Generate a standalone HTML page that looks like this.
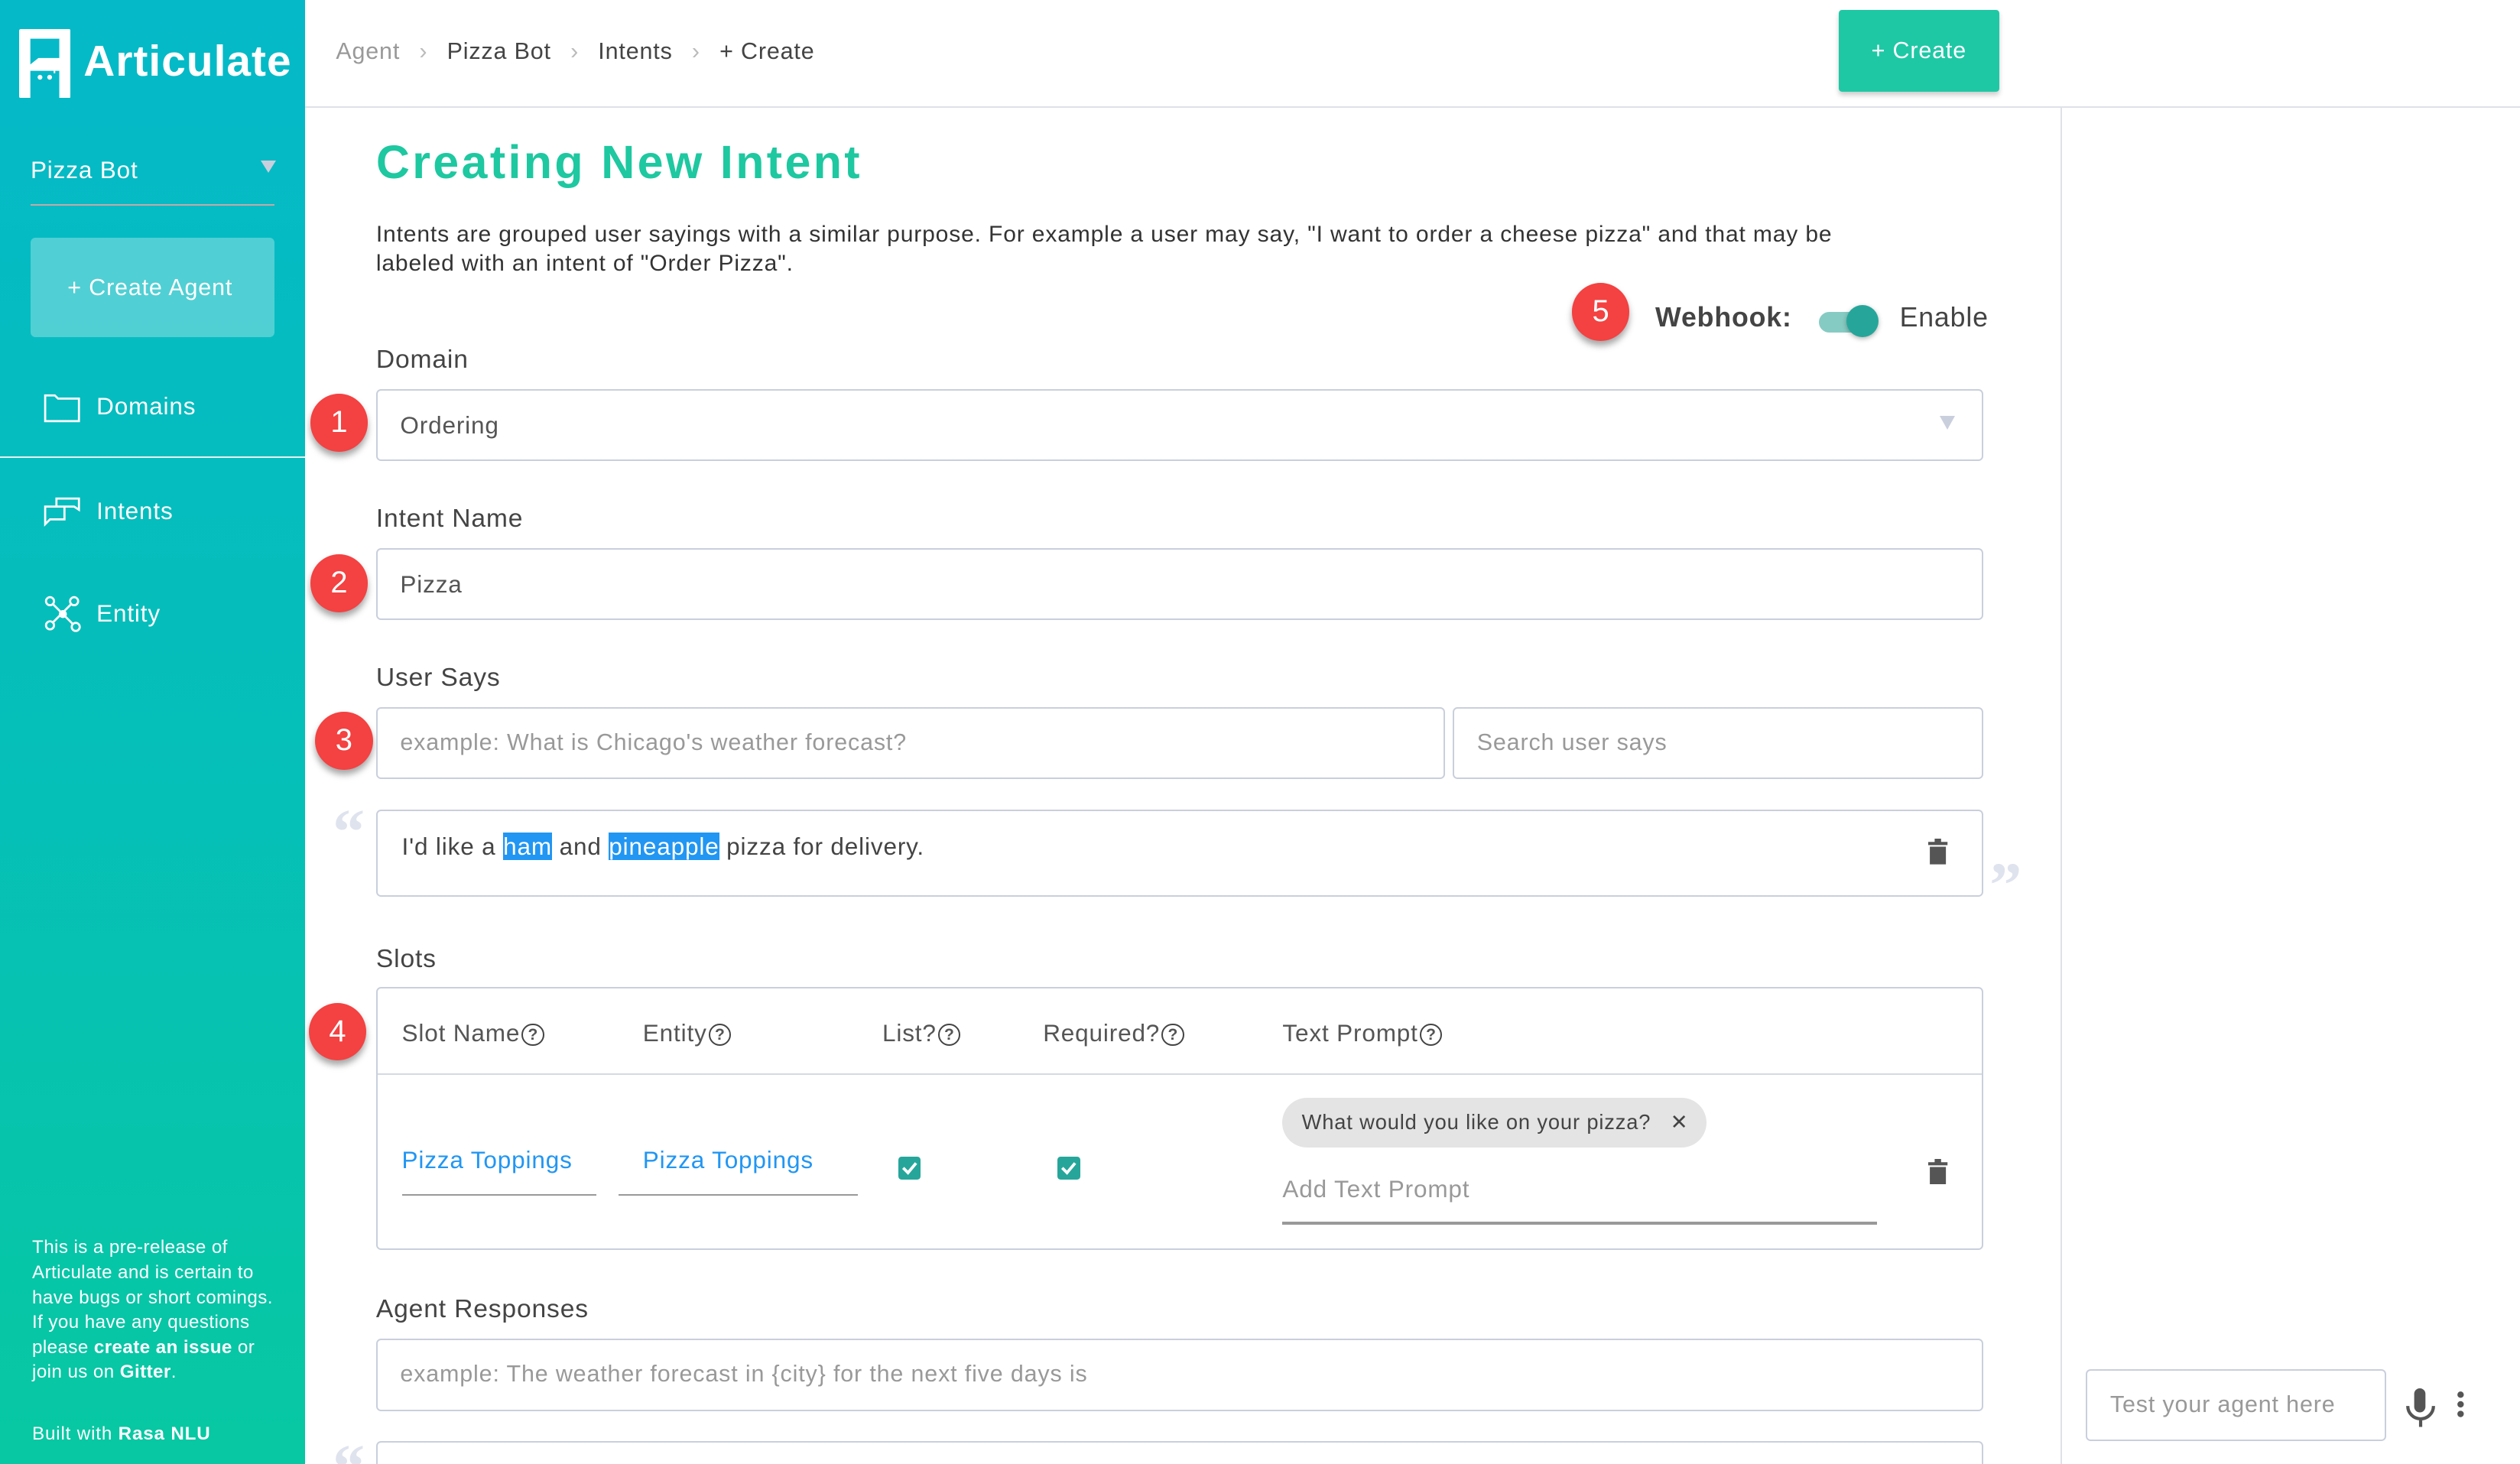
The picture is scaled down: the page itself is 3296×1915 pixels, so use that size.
<!DOCTYPE html>
<html><head><meta charset="utf-8"><style>
html,body{margin:0;padding:0;background:#fff;overflow:hidden}
#w{position:relative;width:1568px;height:911px;zoom:2.102;font-family:"Liberation Sans",sans-serif;color:#444;letter-spacing:0.4px}
.a{position:absolute;white-space:nowrap}
.side{position:absolute;left:0;top:0;width:190px;height:911px;background:linear-gradient(180deg,#05b9c8 0%,#05bfb9 50%,#07c8a2 100%)}
.w{color:#fff}
.box{position:absolute;border:1px solid #c9cfdc;border-radius:3px;background:#fff;box-sizing:border-box}
.lbl{font-size:16px;color:#444}
.badge{position:absolute;width:36px;height:36px;border-radius:50%;background:#f44141;color:#fff;font-size:19px;text-align:center;line-height:36px;box-shadow:0 3px 4px rgba(0,0,0,.35);letter-spacing:0}
.ph{color:#999;font-size:14.5px}
.q{font-size:15px;color:#555}
.help{display:inline-block;width:12px;height:12px;border:1.3px solid #444;border-radius:50%;font-size:10px;line-height:12px;text-align:center;vertical-align:1px;margin-left:1px;font-weight:bold;letter-spacing:0}
.chk{position:absolute;width:14px;height:14px;background:#26a69a;border-radius:2px}
.sep{color:#bbb;margin:0 12px}
</style></head><body><div id="w">
<div class="side">
 <svg class="a" style="left:12px;top:18px" width="32" height="43" viewBox="0 0 32 43"><rect width="32" height="43" rx="1" fill="#fff"/><path d="M7 6h18v12H12l-5 4z" fill="#05b9c8"/><path d="M7 26h18v17H7z" fill="#05b9c8"/><circle cx="13" cy="30" r="1.5" fill="#fff"/><circle cx="19" cy="30" r="1.5" fill="#fff"/><circle cx="22" cy="22" r="1.5" fill="none" stroke="#fff"/><path d="M22 23.5v4" stroke="#fff"/></svg>
 <div class="a w" style="left:52px;top:23px;font-size:27px;font-weight:bold;letter-spacing:0.5px">Articulate</div>
 <div class="a w" style="left:19px;top:97px;font-size:15px">Pizza Bot</div>
 <div class="a" style="left:162px;top:100px;width:0;height:0;border-left:5px solid transparent;border-right:5px solid transparent;border-top:8px solid #c9cfdc"></div>
 <div class="a" style="left:19px;top:127px;width:152px;height:1px;background:#c3a9a9"></div>
 <div class="a" style="left:19px;top:148px;width:152px;height:62px;background:rgba(255,255,255,.3);border-radius:3px"></div>
 <div class="a w" style="left:42px;top:171px;font-size:14.5px">+ Create Agent</div>
 <svg class="a" style="left:27px;top:244px" width="24" height="20"><path d="M1 2h6l2 2h13v14H1z" fill="none" stroke="#fff" stroke-width="1.3"/></svg>
 <div class="a w" style="left:60px;top:244px;font-size:15px">Domains</div>
 <div class="a" style="left:0;top:284px;width:190px;height:1px;background:#e8f6f6"></div>
 <svg class="a" style="left:27px;top:309px" width="24" height="20"><path d="M1 6h12v8H4l-3 3z M8 6V1h14v7l-3-2h-6" fill="none" stroke="#fff" stroke-width="1.3"/></svg>
 <div class="a w" style="left:60px;top:309px;font-size:15px">Intents</div>
 <svg class="a" style="left:27px;top:370px" width="24" height="24"><g fill="none" stroke="#fff" stroke-width="1.3"><circle cx="4" cy="4" r="2.5"/><circle cx="19" cy="4" r="2.5"/><circle cx="4" cy="19" r="2.5"/><circle cx="20" cy="20" r="2.5"/><path d="M6 6l12 12M17 6L6 17"/></g><circle cx="12" cy="12" r="2.5" fill="#fff"/></svg>
 <div class="a w" style="left:60px;top:373px;font-size:15px">Entity</div>
 <div class="a w" style="left:20px;top:769px;font-size:11.5px;line-height:15.5px;white-space:normal;width:152px;letter-spacing:0.2px">This is a pre-release of Articulate and is certain to have bugs or short comings. If you have any questions please <b>create an issue</b> or join us on <b>Gitter</b>.</div>
 <div class="a w" style="left:20px;top:886px;font-size:11.5px">Built with <b>Rasa NLU</b></div>
</div>
<div class="a" style="left:190px;top:66px;width:1378px;height:1px;background:#dde1e8"></div>
<div class="a" style="left:1282px;top:66px;width:1px;height:845px;background:#dde1e8"></div>
<div class="a" style="left:209px;top:24px;font-size:14.5px;color:#999">Agent<span class="sep">›</span><span style="color:#444">Pizza Bot</span><span class="sep">›</span><span style="color:#444">Intents</span><span class="sep">›</span><span style="color:#444">+ Create</span></div>
<div class="a" style="left:1144px;top:6px;width:100px;height:51px;background:#1ec8a5;border-radius:2px;box-shadow:0 2px 3px rgba(0,0,0,.2);color:#fff;font-size:14.5px;text-align:center;line-height:51px">+ Create</div>
<div class="a" style="left:234px;top:84px;font-size:29px;font-weight:bold;color:#1ec8a0;letter-spacing:1.6px">Creating New Intent</div>
<div class="a" style="left:234px;top:137px;font-size:14.3px;line-height:18px;color:#333;white-space:normal;width:955px">Intents are grouped user sayings with a similar purpose. For example a user may say, "I want to order a cheese pizza" and that may be labeled with an intent of "Order Pizza".</div>
<div class="badge" style="left:978px;top:176px">5</div>
<div class="a" style="left:1030px;top:188px;font-size:17px;font-weight:bold;color:#444">Webhook:</div>
<div class="a" style="left:1132px;top:194px;width:34px;height:13px;border-radius:7px;background:#86cbc3"></div>
<div class="a" style="left:1149px;top:190px;width:20px;height:20px;border-radius:50%;background:#26a69a;box-shadow:0 1px 3px rgba(0,0,0,.3)"></div>
<div class="a" style="left:1182px;top:188px;font-size:17px;color:#444">Enable</div>
<div class="a lbl" style="left:234px;top:215px">Domain</div>
<div class="badge" style="left:193px;top:245px">1</div>
<div class="box" style="left:234px;top:242px;width:1000px;height:45px"></div>
<div class="a q" style="left:249px;top:256px">Ordering</div>
<div class="a" style="left:1207px;top:259px;width:0;height:0;border-left:5px solid transparent;border-right:5px solid transparent;border-top:9px solid #c9cfdc"></div>
<div class="a lbl" style="left:234px;top:314px">Intent Name</div>
<div class="badge" style="left:193px;top:345px">2</div>
<div class="box" style="left:234px;top:341px;width:1000px;height:45px"></div>
<div class="a q" style="left:249px;top:355px">Pizza</div>
<div class="a lbl" style="left:234px;top:413px">User Says</div>
<div class="badge" style="left:196px;top:443px">3</div>
<div class="box" style="left:234px;top:440px;width:665px;height:45px"></div>
<div class="a ph" style="left:249px;top:454px">example: What is Chicago's weather forecast?</div>
<div class="box" style="left:904px;top:440px;width:330px;height:45px"></div>
<div class="a ph" style="left:919px;top:454px">Search user says</div>
<div class="a" style="left:207px;top:495px;font-size:40px;font-family:'Liberation Serif',serif;font-weight:bold;color:#dfe3ee">“</div>
<div class="a" style="left:1238px;top:528px;font-size:40px;font-family:'Liberation Serif',serif;font-weight:bold;color:#dfe3ee">”</div>
<div class="box" style="left:234px;top:504px;width:1000px;height:54px"></div>
<div class="a q" style="left:250px;top:518px;color:#444">I'd like a <span style="background:#2196f3;color:#fff">ham</span> and <span style="background:#2196f3;color:#fff">pineapple</span> pizza for delivery.</div>
<svg class="a" style="left:1200px;top:522px" width="12" height="16"><path d="M4 0h4v2h4v2H0V2h4z M1 5h10v11H1z" fill="#555"/></svg>
<div class="a lbl" style="left:234px;top:588px">Slots</div>
<div class="badge" style="left:192px;top:624px">4</div>
<div class="box" style="left:234px;top:614px;width:1000px;height:164px"></div>
<div class="a" style="left:235px;top:668px;width:998px;height:1px;background:#d5d9e2"></div>
<div class="a q" style="left:250px;top:634px">Slot Name<span class="help">?</span></div>
<div class="a q" style="left:400px;top:634px">Entity<span class="help">?</span></div>
<div class="a q" style="left:549px;top:634px">List?<span class="help">?</span></div>
<div class="a q" style="left:649px;top:634px">Required?<span class="help">?</span></div>
<div class="a q" style="left:798px;top:634px">Text Prompt<span class="help">?</span></div>
<div class="a" style="left:250px;top:713px;font-size:15px;color:#2196f3">Pizza Toppings</div>
<div class="a" style="left:250px;top:743px;width:121px;height:1px;background:#999"></div>
<div class="a" style="left:400px;top:713px;font-size:15px;color:#2196f3">Pizza Toppings</div>
<div class="a" style="left:385px;top:743px;width:149px;height:1px;background:#999"></div>
<div class="chk" style="left:559px;top:720px"></div>
<svg class="a" style="left:559px;top:720px" width="14" height="14"><path d="M3 7l3 3 5-6" fill="none" stroke="#fff" stroke-width="1.8"/></svg>
<div class="chk" style="left:658px;top:720px"></div>
<svg class="a" style="left:658px;top:720px" width="14" height="14"><path d="M3 7l3 3 5-6" fill="none" stroke="#fff" stroke-width="1.8"/></svg>
<div class="a" style="left:798px;top:683px;width:264px;height:31px;border-radius:16px;background:#e4e4e4"></div>
<div class="a" style="left:810px;top:691px;font-size:13px;color:#444">What would you like on your pizza? <span style="margin-left:8px">✕</span></div>
<div class="a" style="left:798px;top:731px;font-size:15px;color:#999">Add Text Prompt</div>
<div class="a" style="left:798px;top:760px;width:370px;height:2px;background:#999"></div>
<svg class="a" style="left:1200px;top:721px" width="12" height="16"><path d="M4 0h4v2h4v2H0V2h4z M1 5h10v11H1z" fill="#555"/></svg>
<div class="a lbl" style="left:234px;top:806px">Agent Responses</div>
<div class="box" style="left:234px;top:833px;width:1000px;height:45px"></div>
<div class="a ph" style="left:249px;top:847px">example: The weather forecast in {city} for the next five days is</div>
<div class="a" style="left:207px;top:890px;font-size:40px;font-family:'Liberation Serif',serif;font-weight:bold;color:#dfe3ee">“</div>
<div class="box" style="left:234px;top:897px;width:1000px;height:30px"></div>
<div class="box" style="left:1298px;top:852px;width:187px;height:45px"></div>
<div class="a ph" style="left:1313px;top:866px">Test your agent here</div>
<svg class="a" style="left:1496px;top:864px" width="20" height="24"><rect x="6" y="0" width="7" height="15" rx="3.5" fill="#555"/><path d="M2 11a8 8 0 0 0 16 0M10 19v5" fill="none" stroke="#555" stroke-width="2"/></svg>
<svg class="a" style="left:1528px;top:865px" width="6" height="18"><circle cx="3" cy="3" r="2" fill="#555"/><circle cx="3" cy="9" r="2" fill="#555"/><circle cx="3" cy="15" r="2" fill="#555"/></svg>
</div></body></html>
